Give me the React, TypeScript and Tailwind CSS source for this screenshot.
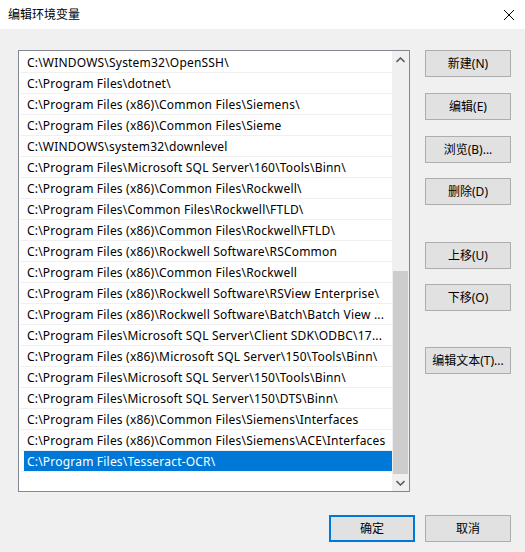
import React from "react";

const paths: string[] = [
  "C:\\WINDOWS\\System32\\OpenSSH\\",
  "C:\\Program Files\\dotnet\\",
  "C:\\Program Files (x86)\\Common Files\\Siemens\\",
  "C:\\Program Files (x86)\\Common Files\\Sieme",
  "C:\\WINDOWS\\system32\\downlevel",
  "C:\\Program Files\\Microsoft SQL Server\\160\\Tools\\Binn\\",
  "C:\\Program Files (x86)\\Common Files\\Rockwell\\",
  "C:\\Program Files\\Common Files\\Rockwell\\FTLD\\",
  "C:\\Program Files (x86)\\Common Files\\Rockwell\\FTLD\\",
  "C:\\Program Files (x86)\\Rockwell Software\\RSCommon",
  "C:\\Program Files (x86)\\Common Files\\Rockwell",
  "C:\\Program Files (x86)\\Rockwell Software\\RSView Enterprise\\",
  "C:\\Program Files (x86)\\Rockwell Software\\Batch\\Batch View ...",
  "C:\\Program Files\\Microsoft SQL Server\\Client SDK\\ODBC\\17...",
  "C:\\Program Files (x86)\\Microsoft SQL Server\\150\\Tools\\Binn\\",
  "C:\\Program Files\\Microsoft SQL Server\\150\\Tools\\Binn\\",
  "C:\\Program Files\\Microsoft SQL Server\\150\\DTS\\Binn\\",
  "C:\\Program Files (x86)\\Common Files\\Siemens\\Interfaces",
  "C:\\Program Files (x86)\\Common Files\\Siemens\\ACE\\Interfaces",
  "C:\\Program Files\\Tesseract-OCR\\",
];

const font = { fontFamily: '"Noto Sans", "Noto Sans CJK SC", sans-serif' };

function Btn({ label, primary = false }: { label: string; primary?: boolean }) {
  return (
    <div
      className={
        "w-[86px] h-[27px] flex items-center justify-center bg-[#e1e1e1] text-[12px] text-black " +
        (primary ? "border-2 border-[#0078d7]" : "border border-[#adadad]")
      }
    >
      {label}
    </div>
  );
}

function Chevron({ up }: { up: boolean }) {
  return (
    <svg width="9" height="6" viewBox="0 0 9 6">
      <path
        d={up ? "M0.5 5 L4.5 1 L8.5 5" : "M0.5 1 L4.5 5 L8.5 1"}
        stroke="#606060"
        strokeWidth="1.6"
        fill="none"
      />
    </svg>
  );
}

export default function App() {
  return (
    <div className="w-[525px] h-[552px] bg-[#f0f0f0] flex flex-col overflow-hidden" style={font}>
      {/* title bar */}
      <div className="h-[29px] bg-white flex items-center justify-between pl-[8px] pr-[10px]">
        <span className="text-[12px] text-black">编辑环境变量</span>
        <svg width="12" height="12" viewBox="0 0 12 12">
          <path d="M1 1 L11 11 M11 1 L1 11" stroke="#000" strokeWidth="1" />
        </svg>
      </div>

      <div className="flex pl-[18px] pt-[21px]">
        {/* path list */}
        <div className="w-[392px] h-[442px] border border-[#828790] bg-white flex">
          <div className="flex-1 flex flex-col pl-[1px] pt-[1px]">
            {paths.map((p, i) => {
              const selected = i === paths.length - 1;
              return (
                <div key={i} className="h-[21px] border-b border-[#f0f0f0] flex">
                  <div
                    className={
                      "flex-1 ml-[4px] flex items-center pl-[3px] pt-[1px] text-[12px] tracking-[0.2px] whitespace-nowrap overflow-hidden " +
                      (selected ? "bg-[#0078d7] text-white" : "text-black")
                    }
                  >
                    {p}
                  </div>
                </div>
              );
            })}
          </div>
          {/* scrollbar */}
          <div className="w-[17px] bg-[#f0f0f0] flex flex-col">
            <div className="h-[17px] flex items-center justify-center">
              <Chevron up />
            </div>
            <div className="flex-1 flex flex-col px-[1px]">
              <div className="h-[203px]" />
              <div className="flex-1 bg-[#cdcdcd]" />
            </div>
            <div className="h-[17px] flex items-center justify-center">
              <Chevron up={false} />
            </div>
          </div>
        </div>

        {/* action buttons */}
        <div className="ml-[15px] flex flex-col">
          <Btn label="新建(N)" />
          <div className="h-[16px]" />
          <Btn label="编辑(E)" />
          <div className="h-[16px]" />
          <Btn label="浏览(B)..." />
          <div className="h-[15px]" />
          <Btn label="删除(D)" />
          <div className="h-[37px]" />
          <Btn label="上移(U)" />
          <div className="h-[15px]" />
          <Btn label="下移(O)" />
          <div className="h-[36px]" />
          <Btn label="编辑文本(T)..." />
        </div>
      </div>

      {/* dialog buttons */}
      <div className="flex justify-end gap-[10px] pr-[14px] pt-[23px]">
        <Btn label="确定" primary />
        <Btn label="取消" />
      </div>
    </div>
  );
}
